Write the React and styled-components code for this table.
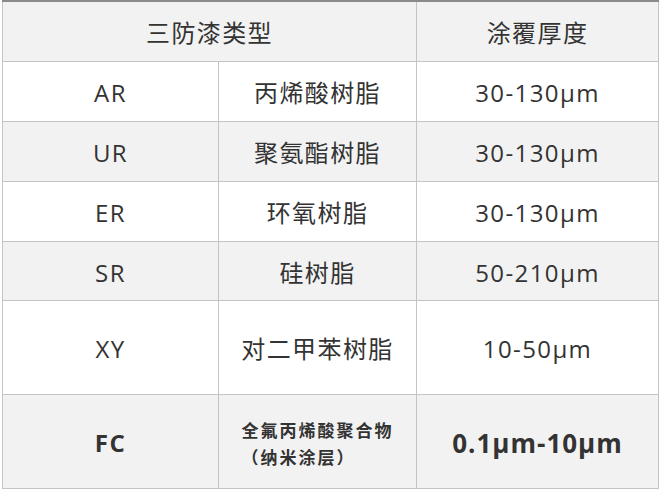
import React from 'react';
import styled, { createGlobalStyle } from 'styled-components';

const GlobalStyle = createGlobalStyle`
  html, body {
    margin: 0;
    padding: 0;
    background: #ffffff;
  }
`;

const Page = styled.div`
  padding: 0 2px;
  font-family: "Open Sans", "Noto Sans CJK SC", sans-serif;
  color: #333333;
`;

const Table = styled.table`
  width: 656px;
  border-collapse: collapse;
  table-layout: fixed;
  border-top: 2px solid #8a8a8a;
  border-left: 1px solid #444444;
  border-right: 1px solid #444444;
  border-bottom: 1px solid #444444;
`;

const Cell = styled.td`
  height: ${(p) => p.$h || 59}px;
  padding: 5px 0 0;
  box-sizing: border-box;
  border: 1px solid #c4c4c4;
  background: ${(p) => (p.$shade ? '#f2f2f2' : '#ffffff')};
  text-align: center;
  vertical-align: middle;
  font-size: 24px;
  font-weight: ${(p) => (p.$bold ? 700 : 400)};
  letter-spacing: 1.4px;
  line-height: 1.2;
`;

const SmallBold = styled.div`
  display: inline-block;
  font-size: 17px;
  font-weight: 700;
  letter-spacing: 2px;
  line-height: 27px;
  text-align: left;
`;

const BigBold = styled.span`
  font-size: 26px;
  font-weight: 700;
  letter-spacing: 1px;
`;

const rows = [
  { code: 'AR', name: '丙烯酸树脂', range: '30-130μm', h: 60 },
  { code: 'UR', name: '聚氨酯树脂', range: '30-130μm', h: 60 },
  { code: 'ER', name: '环氧树脂', range: '30-130μm', h: 60 },
  { code: 'SR', name: '硅树脂', range: '50-210μm', h: 59 },
  { code: 'XY', name: '对二甲苯树脂', range: '10-50μm', h: 94 },
];

const App = () => (
  <Page>
    <GlobalStyle />
    <Table>
      <colgroup>
        <col style={{ width: 216 }} />
        <col style={{ width: 198 }} />
        <col style={{ width: 242 }} />
      </colgroup>
      <tbody>
        <tr>
          <Cell as="th" colSpan={2} $shade $h={60}>三防漆类型</Cell>
          <Cell as="th" $shade $h={60}>涂覆厚度</Cell>
        </tr>
        {rows.map((r, i) => (
          <tr key={r.code}>
            <Cell $shade={i % 2 === 1} $h={r.h}>{r.code}</Cell>
            <Cell $shade={i % 2 === 1} $h={r.h}>{r.name}</Cell>
            <Cell $shade={i % 2 === 1} $h={r.h}>{r.range}</Cell>
          </tr>
        ))}
        <tr>
          <Cell $shade $bold $h={94}>FC</Cell>
          <Cell $shade $h={94}>
            <SmallBold>
              全氟丙烯酸聚合物
              <br />
              （纳米涂层）
            </SmallBold>
          </Cell>
          <Cell $shade $h={94}>
            <BigBold>0.1μm-10μm</BigBold>
          </Cell>
        </tr>
      </tbody>
    </Table>
  </Page>
);

export default App;
